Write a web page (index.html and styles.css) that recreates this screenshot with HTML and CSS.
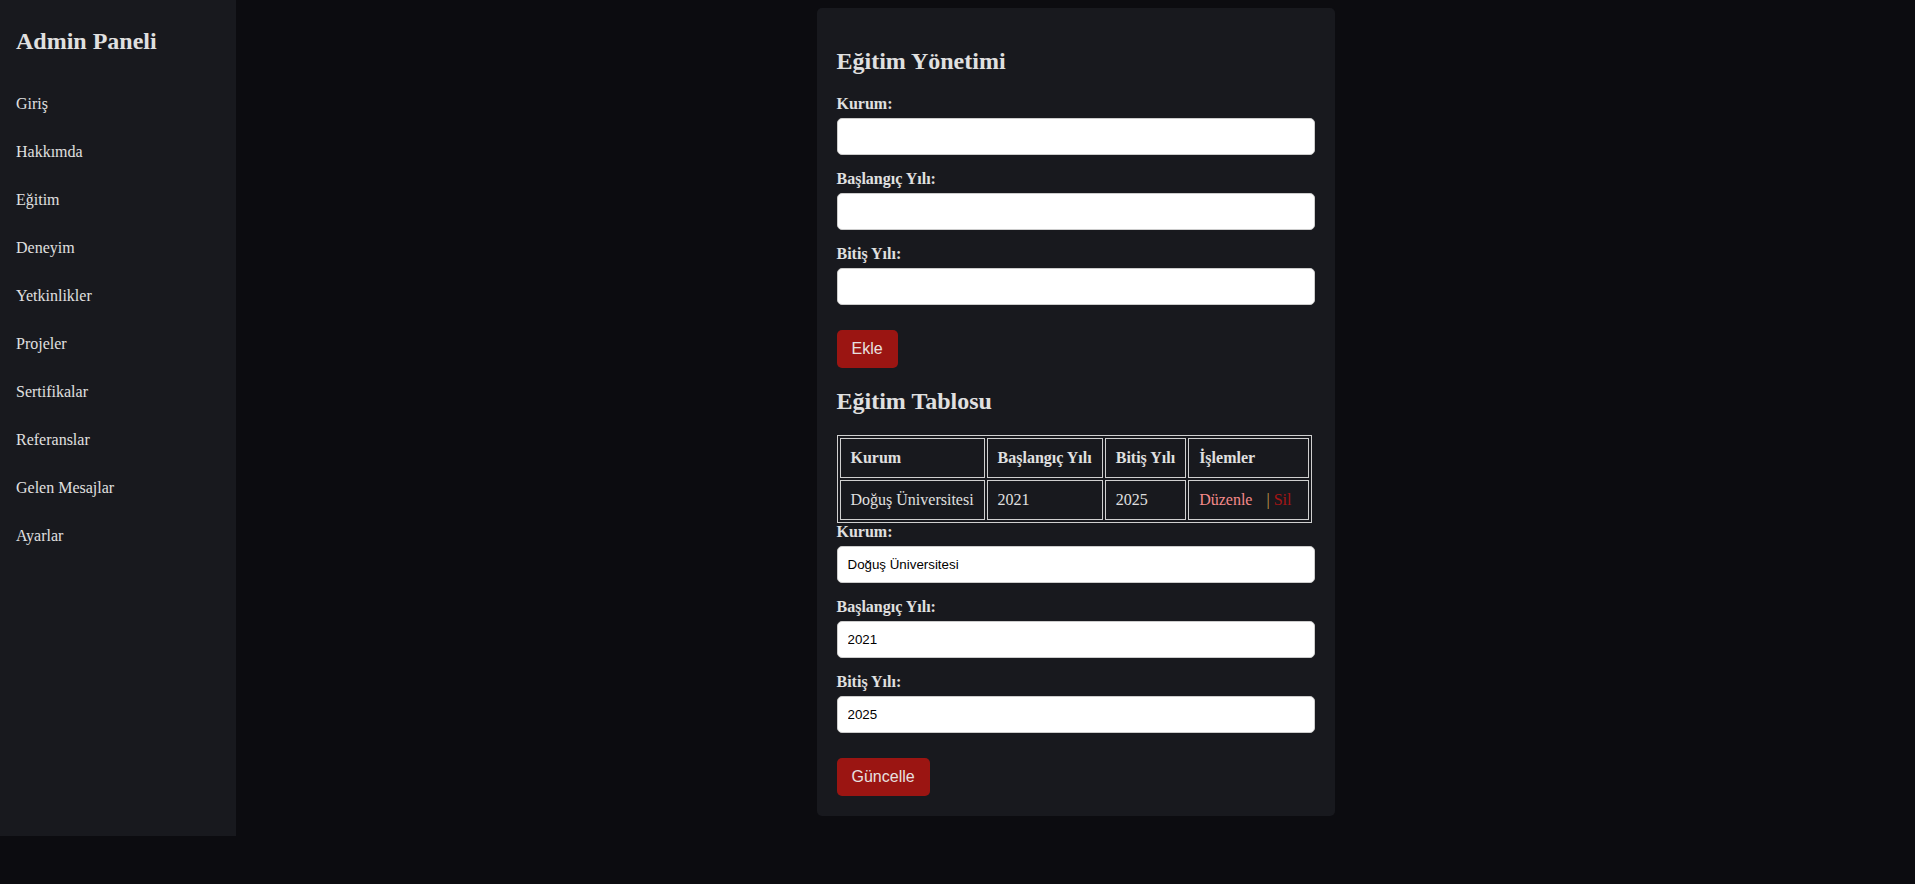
FILE: index.html
```html
<!DOCTYPE html>
<html lang="tr">
<head>
<meta charset="utf-8">
<title>Admin Paneli - Eğitim</title>
<link rel="stylesheet" href="styles.css">
</head>
<body>
<div class="layout">
  <aside class="sidebar">
    <h2 class="brand">Admin Paneli</h2>
    <ul class="nav">
      <li><a href="#">Giriş</a></li>
      <li><a href="#">Hakkımda</a></li>
      <li><a href="#">Eğitim</a></li>
      <li><a href="#">Deneyim</a></li>
      <li><a href="#">Yetkinlikler</a></li>
      <li><a href="#">Projeler</a></li>
      <li><a href="#">Sertifikalar</a></li>
      <li><a href="#">Referanslar</a></li>
      <li><a href="#">Gelen Mesajlar</a></li>
      <li><a href="#">Ayarlar</a></li>
    </ul>
  </aside>
  <main class="main">
    <section class="card">
      <h2 class="title">Eğitim Yönetimi</h2>
      <form class="form">
        <label class="label">Kurum:</label>
        <input class="input" type="text">
        <label class="label">Başlangıç Yılı:</label>
        <input class="input" type="text">
        <label class="label">Bitiş Yılı:</label>
        <input class="input" type="text">
        <button class="btn" type="button">Ekle</button>
      </form>
      <h2 class="title">Eğitim Tablosu</h2>
      <table class="table">
        <thead>
          <tr><th>Kurum</th><th>Başlangıç Yılı</th><th>Bitiş Yılı</th><th>İşlemler</th></tr>
        </thead>
        <tbody>
          <tr>
            <td>Doğuş Üniversitesi</td>
            <td>2021</td>
            <td>2025</td>
            <td><a class="edit" href="#">Düzenle</a> <span class="sep">|</span> <a class="del" href="#">Sil</a></td>
          </tr>
        </tbody>
      </table>
      <form class="form">
        <label class="label">Kurum:</label>
        <input class="input" type="text" value="Doğuş Üniversitesi">
        <label class="label">Başlangıç Yılı:</label>
        <input class="input" type="text" value="2021">
        <label class="label">Bitiş Yılı:</label>
        <input class="input" type="text" value="2025">
        <button class="btn" type="button">Güncelle</button>
      </form>
    </section>
  </main>
</div>
</body>
</html>
```
FILE: styles.css
```css
html, body {
  margin: 0;
  padding: 0;
  background: #0c0c10;
  color: #e0e0e0;
  font-family: "Liberation Serif", "Times New Roman", serif;
  font-size: 16px;
}

.layout {
  display: flex;
  align-items: stretch;
}

.sidebar {
  width: 236px;
  flex: 0 0 236px;
  box-sizing: border-box;
  background: #18191e;
  padding: 8px 16px;
}

.brand {
  font-size: 24px;
  font-weight: bold;
  margin: 20px 0 30px;
  color: #e0e0e0;
}

.nav {
  list-style: none;
  margin: 0;
  padding: 0;
}

.nav li {
  margin-bottom: 10px;
}

.nav a {
  display: block;
  padding: 10px 0;
  color: #e0e0e0;
  text-decoration: none;
}

.main {
  flex: 1;
  display: flex;
  justify-content: center;
  align-items: flex-start;
  padding: 8px 0 20px;
}

.card {
  width: 518px;
  box-sizing: border-box;
  background: #18191e;
  border-radius: 5px;
  padding: 20px;
}

.title {
  font-size: 24px;
  font-weight: bold;
  margin: 20px 0;
  color: #e0e0e0;
}

.form {
  margin: 0;
}

.label {
  display: block;
  font-weight: bold;
  line-height: 18px;
  margin-bottom: 5px;
}

.input {
  display: block;
  width: 100%;
  box-sizing: border-box;
  padding: 10px;
  margin: 0 0 15px;
  border: 1px solid #ccc;
  border-radius: 5px;
  background: #fff;
  color: #000;
  font-family: "Liberation Sans", Arial, sans-serif;
  font-size: 13.333px;
  line-height: 15px;
}

.btn {
  display: inline-block;
  margin-top: 10px;
  padding: 10px 15px;
  border: none;
  border-radius: 5px;
  background: #9b1512;
  color: #e8e0e0;
  font-family: "Liberation Sans", Arial, sans-serif;
  font-size: 16px;
  line-height: 18px;
}

.table {
  border: 1px solid #d0d0d0;
  border-spacing: 2px;
  margin: 0;
}

.table th,
.table td {
  border: 1px solid #d0d0d0;
  padding: 10px;
  text-align: left;
  line-height: 18px;
  white-space: nowrap;
}

.table th {
  font-weight: bold;
}

.edit {
  color: #f58a8a;
  text-decoration: none;
  margin-right: 10px;
}

.sep {
  color: #c0a050;
}

.del {
  color: #a51515;
  text-decoration: none;
  margin-right: 7px;
}
```
